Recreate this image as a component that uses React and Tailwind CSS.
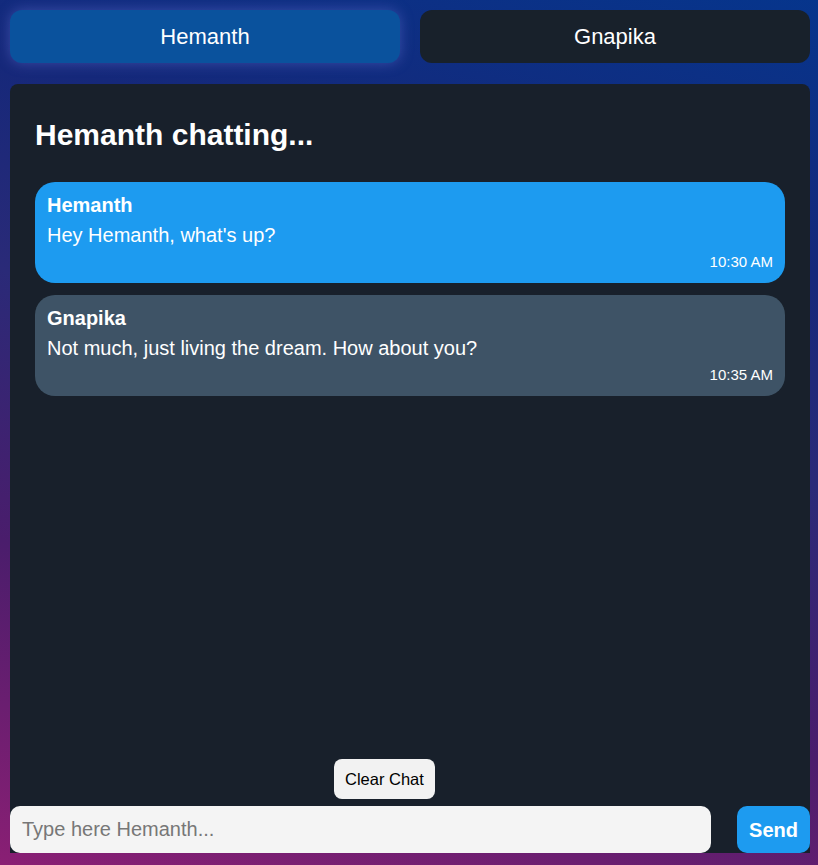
import { useState } from 'react'

const messages = [
  { id: 1, user: 'Hemanth', text: "Hey Hemanth, what's up?", time: '10:30 AM', mine: true },
  { id: 2, user: 'Gnapika', text: 'Not much, just living the dream. How about you?', time: '10:35 AM', mine: false },
]

export default function App() {
  const [active, setActive] = useState('Hemanth')
  const [draft, setDraft] = useState('')

  return (
    <div
      className="min-h-[865px] pt-[10px] pl-[10px] pr-[8px] pb-[12px] flex flex-col text-white bg-[linear-gradient(195deg,#06358c_0%,#15287a_25%,#2a2a78_45%,#4a1d6c_70%,#8a1f74_100%)]"
      style={{ fontFamily: '"Liberation Sans", Arial, sans-serif' }}
    >
      {/* User tabs */}
      <div className="grid grid-cols-2 gap-5">
        {['Hemanth', 'Gnapika'].map(name => (
          <button
            key={name}
            onClick={() => setActive(name)}
            className={`h-[53px] rounded-xl text-[22px] ${
              active === name
                ? 'bg-[#0a529d] shadow-[0_0_14px_rgba(110,120,220,0.45)]'
                : 'bg-[#18212b]'
            }`}
          >
            {name}
          </button>
        ))}
      </div>

      {/* Chat panel */}
      <div className="mt-[21px] flex-1 flex flex-col bg-[#18202b] rounded-t-lg">
        <div className="flex-1 px-[25px] pt-[33px]">
          <h2 className="text-[30px] leading-[36px] font-bold mb-[29px]">{active} chatting...</h2>
          <div className="flex flex-col gap-3">
            {messages.map(m => (
              <div
                key={m.id}
                className={`rounded-[20px] px-3 pt-3 pb-[11px] ${m.mine ? 'bg-[#1d9bf0]' : 'bg-[#3e5366]'}`}
              >
                <p className="text-xl leading-[22px] font-bold">{m.user}</p>
                <p className="text-xl leading-[24px] mt-[7px]">{m.text}</p>
                <p className="text-[15px] leading-[20px] mt-[5px] text-right">{m.time}</p>
              </div>
            ))}
          </div>
        </div>

        <div className="pl-[324px]">
          <button className="h-10 px-[11px] rounded-lg bg-[#f2f2f2] text-black text-[16.5px]">Clear Chat</button>
        </div>

        <div className="mt-[7px] flex gap-[26px]">
          <input
            value={draft}
            onChange={e => setDraft(e.target.value)}
            placeholder={`Type here ${active}...`}
            className="flex-1 h-[47px] rounded-[10px] bg-[#f4f4f4] px-3 text-[20px] text-black placeholder:text-[#777] outline-none"
          />
          <button className="w-[73px] h-[47px] rounded-[10px] bg-[#1d9bf0] text-[20px] font-bold">Send</button>
        </div>
      </div>
    </div>
  )
}
